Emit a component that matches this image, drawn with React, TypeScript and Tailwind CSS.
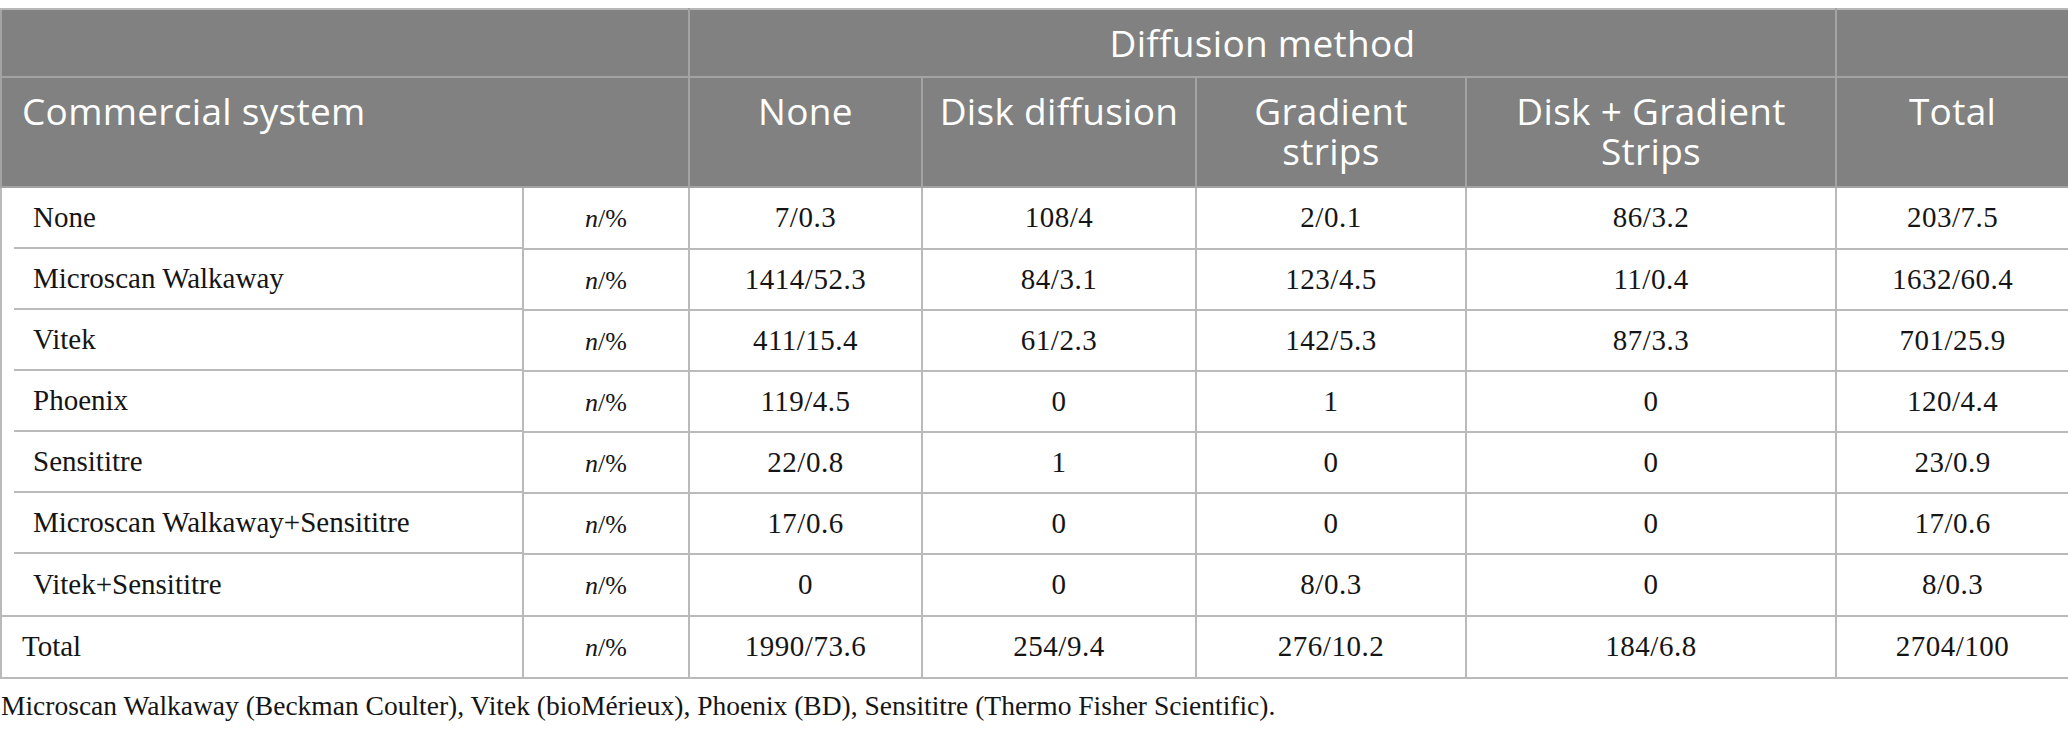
const rows = [
  { label: 'None', cells: ['7/0.3', '108/4', '2/0.1', '86/3.2', '203/7.5'] },
  { label: 'Microscan Walkaway', cells: ['1414/52.3', '84/3.1', '123/4.5', '11/0.4', '1632/60.4'] },
  { label: 'Vitek', cells: ['411/15.4', '61/2.3', '142/5.3', '87/3.3', '701/25.9'] },
  { label: 'Phoenix', cells: ['119/4.5', '0', '1', '0', '120/4.4'] },
  { label: 'Sensititre', cells: ['22/0.8', '1', '0', '0', '23/0.9'] },
  { label: 'Microscan Walkaway+Sensititre', cells: ['17/0.6', '0', '0', '0', '17/0.6'] },
  { label: 'Vitek+Sensititre', cells: ['0', '0', '8/0.3', '0', '8/0.3'] },
];

const totals = ['1990/73.6', '254/9.4', '276/10.2', '184/6.8', '2704/100'];

function Unit() {
  return (
    <span className="text-[26px] tracking-normal">
      <i>n</i>/%
    </span>
  );
}

export default function App() {
  const sans = "font-['Open_Sans',sans-serif]";
  const serif = "font-['Liberation_Serif',serif]";

  return (
    <div className="w-[2068px] h-[734px] bg-white pt-[8px] overflow-hidden">
      <table className="w-[2068px] table-fixed border-collapse">
        <colgroup>
          <col className="w-[522px]" />
          <col className="w-[166px]" />
          <col className="w-[233px]" />
          <col className="w-[274px]" />
          <col className="w-[270px]" />
          <col className="w-[370px]" />
          <col className="w-[233px]" />
        </colgroup>
        <thead className={`bg-[#808180] text-white ${sans} text-[37px] leading-[40px] tracking-[0.3px] font-normal`}>
          <tr className="h-[68px]">
            <th colSpan={2} className="border-2 border-[#a3a3a3] border-t-[#b8b8b8]"></th>
            <th colSpan={4} className="border-2 border-[#a3a3a3] border-t-[#b8b8b8] font-normal text-center align-middle">
              Diffusion method
            </th>
            <th className="border-2 border-[#a3a3a3] border-t-[#b8b8b8]"></th>
          </tr>
          <tr className="h-[110px]">
            <th colSpan={2} className="border-2 border-[#a3a3a3] font-normal text-left align-top pt-[13px] pl-[20px]">
              Commercial system
            </th>
            <th className="border-2 border-[#a3a3a3] font-normal align-top pt-[13px]">None</th>
            <th className="border-2 border-[#a3a3a3] font-normal align-top pt-[13px]">Disk diffusion</th>
            <th className="border-2 border-[#a3a3a3] font-normal align-top pt-[13px] px-[40px]">Gradient strips</th>
            <th className="border-2 border-[#a3a3a3] font-normal align-top pt-[13px] px-[40px]">Disk + Gradient Strips</th>
            <th className="border-2 border-[#a3a3a3] font-normal align-top pt-[13px]">Total</th>
          </tr>
        </thead>
        <tbody className={`${serif} text-[29px] tracking-[0.5px] text-[#151515]`}>
          {rows.map((r, i) => (
            <tr key={r.label}>
              <td className={`p-0 border-l-2 border-[#bababa] ${i === rows.length - 1 ? 'border-b-2' : ''}`}>
                <div
                  className={`ml-[12px] h-[61px] flex items-center pl-[19px] text-[29px] tracking-normal ${
                    i === rows.length - 1 ? '' : 'border-b-2 border-[#bababa]'
                  }`}
                >
                  {r.label}
                </div>
              </td>
              <td className="border-2 border-[#bababa] text-center">
                <Unit />
              </td>
              {r.cells.map((c, j) => (
                <td key={j} className="border-2 border-[#bababa] text-center">
                  {c}
                </td>
              ))}
            </tr>
          ))}
          <tr>
            <td className="p-0 border-2 border-r-0 border-[#bababa]">
              <div className="h-[60px] flex items-center pl-[20px] text-[29px] tracking-normal">Total</div>
            </td>
            <td className="border-2 border-[#bababa] text-center">
              <Unit />
            </td>
            {totals.map((c, j) => (
              <td key={j} className="border-2 border-[#bababa] text-center">
                {c}
              </td>
            ))}
          </tr>
        </tbody>
      </table>
      <p className={`${serif} text-[27.5px] text-[#151515] pl-[1px] mt-[6px]`}>
        Microscan Walkaway (Beckman Coulter), Vitek (bioMérieux), Phoenix (BD), Sensititre (Thermo Fisher Scientific).
      </p>
    </div>
  );
}
